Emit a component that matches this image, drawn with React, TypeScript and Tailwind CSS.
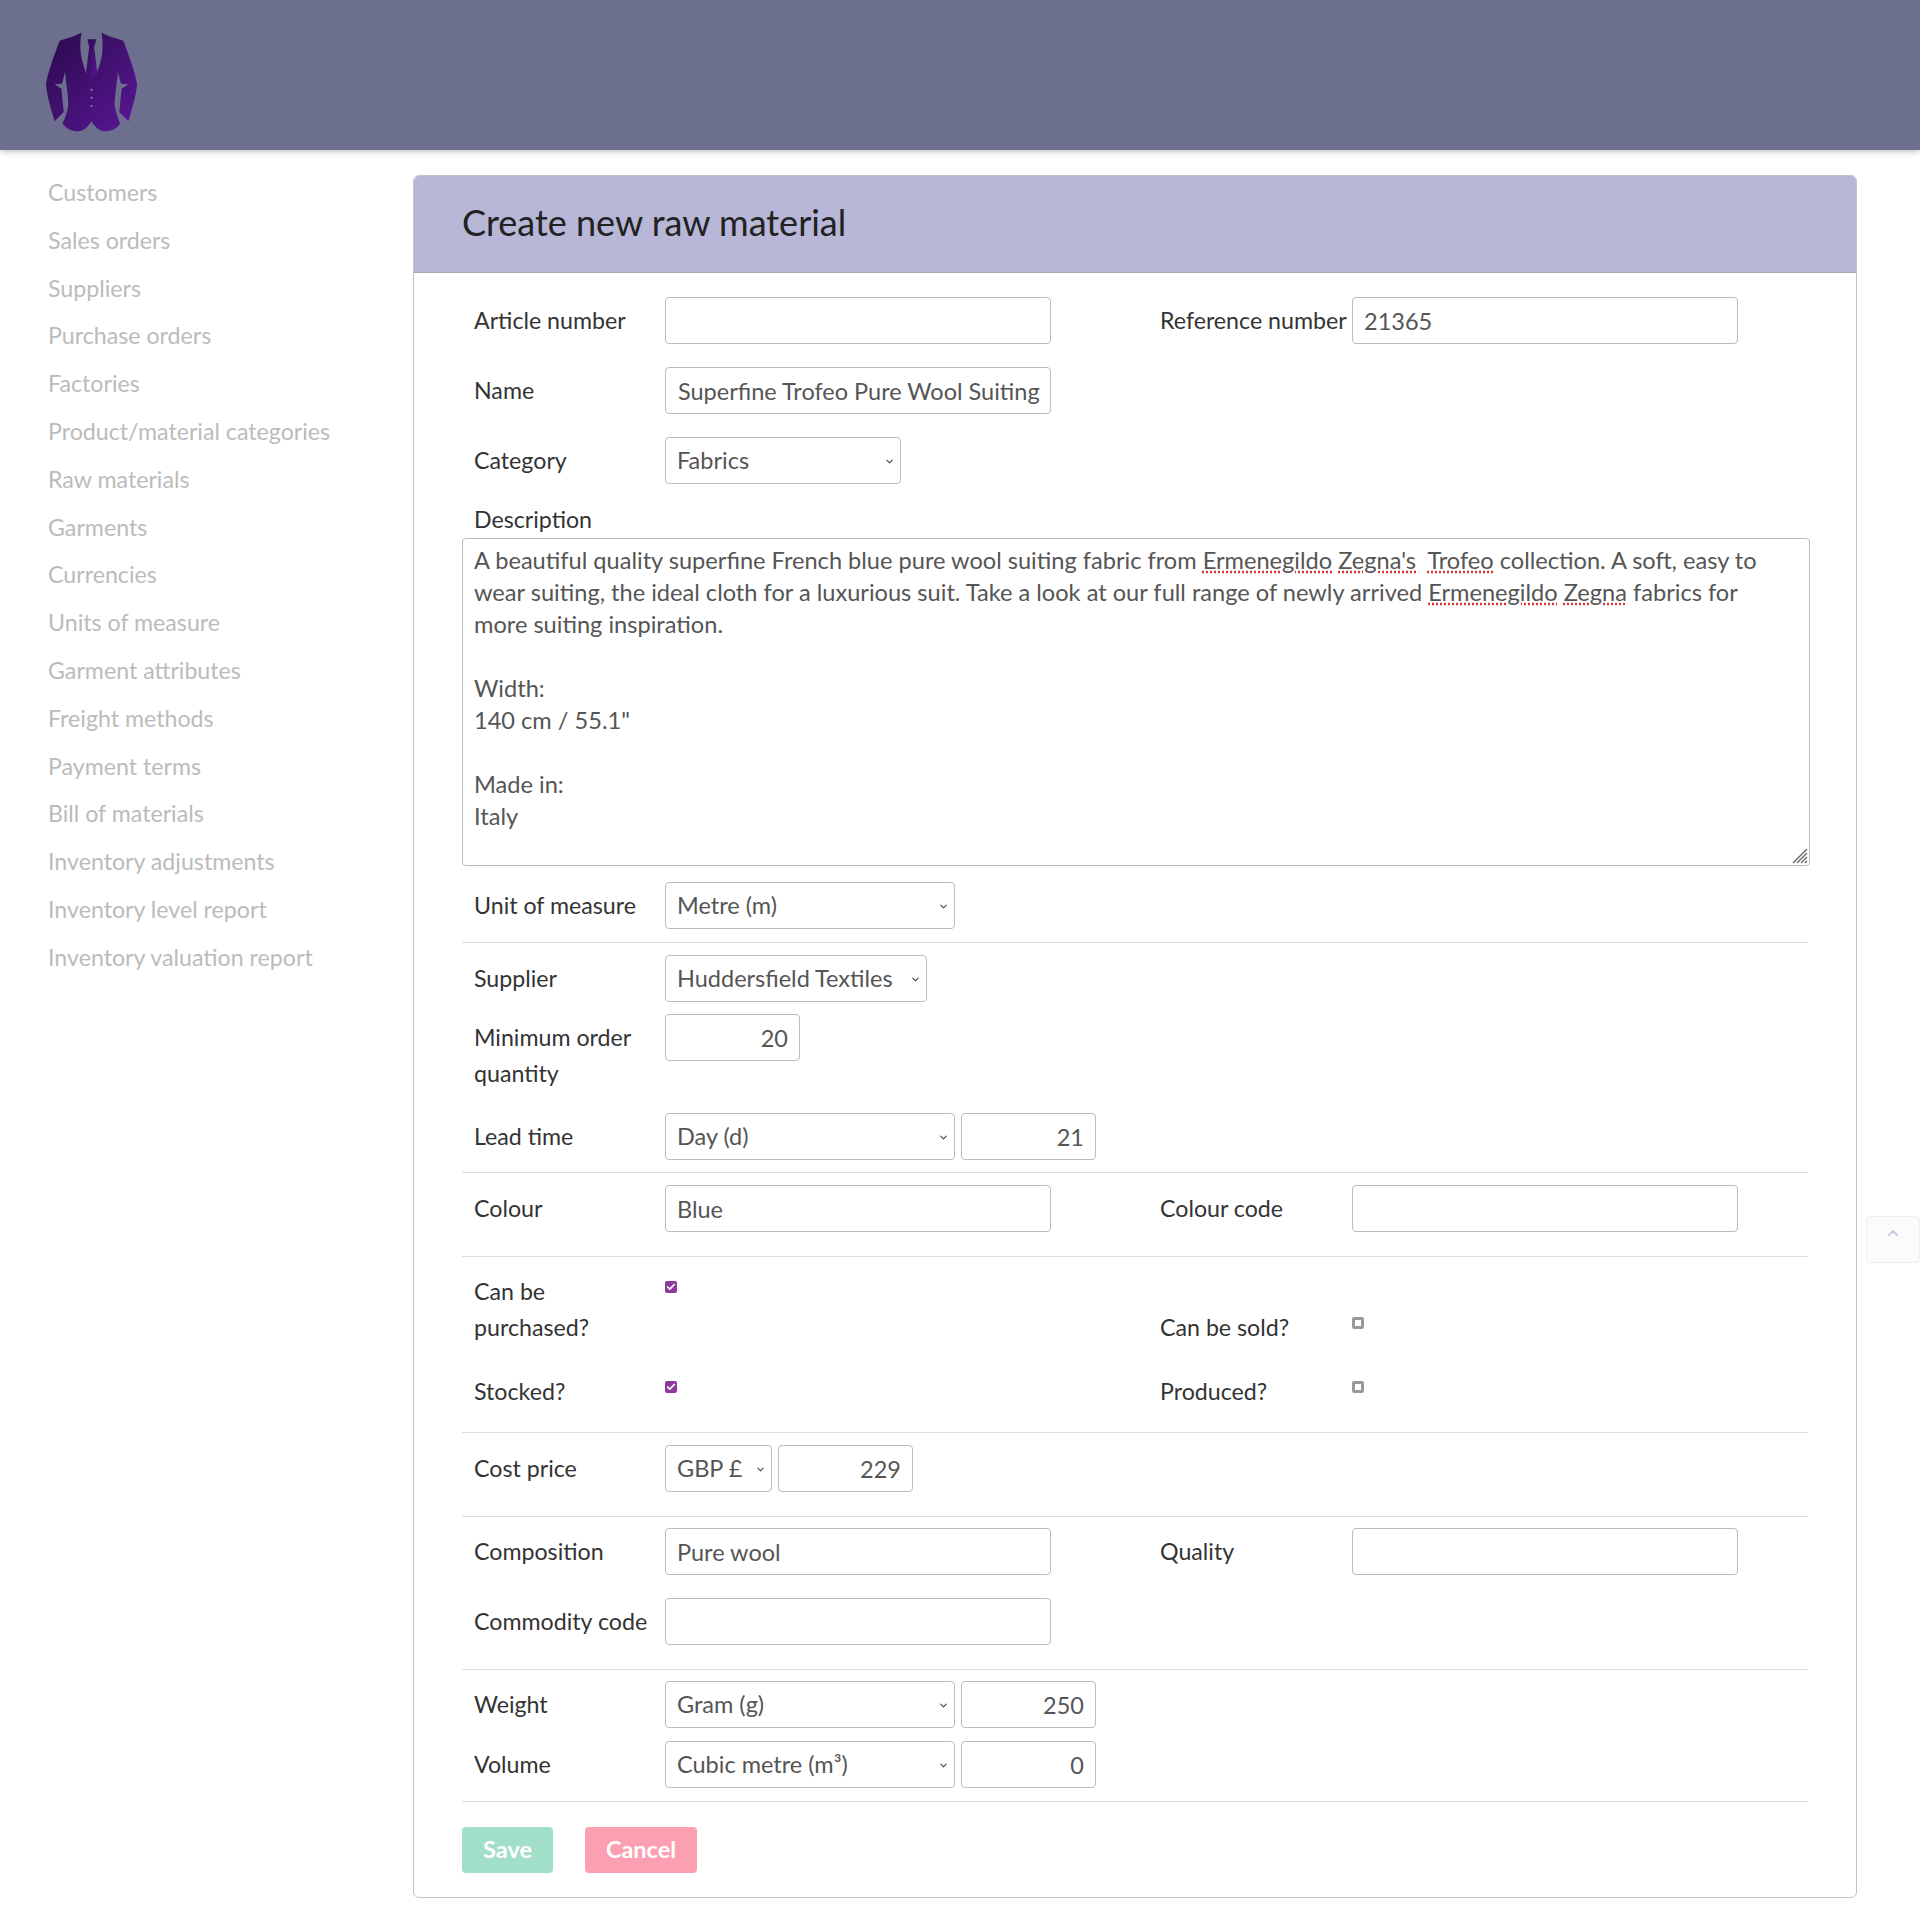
import { ChevronDown, ChevronUp, Check } from "lucide-react";
import type { ReactNode } from "react";

const menu = [
  "Customers",
  "Sales orders",
  "Suppliers",
  "Purchase orders",
  "Factories",
  "Product/material categories",
  "Raw materials",
  "Garments",
  "Currencies",
  "Units of measure",
  "Garment attributes",
  "Freight methods",
  "Payment terms",
  "Bill of materials",
  "Inventory adjustments",
  "Inventory level report",
  "Inventory valuation report",
];

function Logo() {
  return (
    <svg viewBox="130 90 290 310" className="w-[97px] h-[104px]">
      <defs>
        <linearGradient id="suit" x1="0" y1="0" x2="1" y2="1">
          <stop offset="0" stopColor="#2a0a4c" />
          <stop offset="1" stopColor="#5a1796" />
        </linearGradient>
      </defs>
      <path
        fill="url(#suit)"
        d="M245 97C225 110 195 115 180 122C165 160 145 215 139 250C140 280 155 330 165 362L192 335L185 265L165 252L187 250L196 215C200 260 208 300 205 320C200 340 195 360 188 368C200 385 215 392 235 392C250 392 265 380 275 362C285 380 300 392 315 392C335 392 350 385 361 368C355 360 350 340 345 320C342 300 350 260 354 215L363 250L385 252L365 265L358 335L385 362C395 330 410 280 411 250C405 215 385 160 370 122C355 115 325 110 305 97C310 130 312 165 291 218L275 225L259 218C238 165 240 130 245 97Z"
      />
      <path fill="url(#suit)" d="M263 117H290L283 140L292 215L275 240L259 215L268 140Z" />
      <circle cx="275" cy="268" r="3" fill="#9a86b4" />
      <circle cx="275" cy="292" r="3" fill="#9a86b4" />
      <circle cx="275" cy="317" r="3" fill="#9a86b4" />
    </svg>
  );
}

function Label({ children, wide, flat }: { children: ReactNode; wide?: boolean; flat?: boolean }) {
  return (
    <label
      className={`shrink-0 leading-[36px] text-[#333] text-[23.2px] ${flat ? "" : "pt-[5px]"} ${
        wide ? "w-[192px]" : "w-[203px] pl-3"
      }`}
    >
      {children}
    </label>
  );
}

function TextInput({ value = "", pad = "pl-[11px]" }: { value?: string; pad?: string }) {
  return (
    <input
      readOnly
      value={value}
      className={`w-[386px] h-[47px] border border-[#bbb] rounded ${pad} pr-1 bg-white text-[#555] outline-none`}
    />
  );
}

function NumberInput({ value }: { value: string }) {
  return (
    <input
      readOnly
      value={value}
      className="w-[135px] h-[47px] border border-[#bbb] rounded px-[11px] bg-white text-right text-[#555] outline-none"
    />
  );
}

function Select({ value, w }: { value: string; w: string }) {
  return (
    <div className={`relative ${w} h-[47px]`}>
      <select className="appearance-none w-full h-full border border-[#bbb] rounded pl-[11px] bg-white text-[#555] outline-none">
        <option>{value}</option>
      </select>
      <ChevronDown size={11} strokeWidth={2.25} className="absolute right-[6px] top-[19px] text-[#444]" />
    </div>
  );
}

function Checkbox({ checked }: { checked?: boolean }) {
  if (checked) {
    return (
      <span className="flex items-center justify-center w-3 h-3 rounded-[2px] bg-[#8e3a9d] text-white">
        <Check size={10} strokeWidth={4} />
      </span>
    );
  }
  return <span className="block w-3 h-3 rounded-[2px] border-[3px] border-[#999] bg-white" />;
}

function Row({ className = "", children }: { className?: string; children: ReactNode }) {
  return <div className={`flex ${className}`}>{children}</div>;
}

function Divider({ className }: { className: string }) {
  return <hr className={`border-0 h-px bg-[#dcdce4] w-[1346px] ${className}`} />;
}

function Err({ children }: { children: ReactNode }) {
  return <span className="underline decoration-dotted decoration-[#d33]">{children}</span>;
}

export default function App() {
  return (
    <div className="relative min-h-[1923px] bg-white font-['Lato','Liberation_Sans',sans-serif] text-[23.5px]">
      <header className="h-[150px] bg-[#6c6f8e] pl-[43px] pt-[30px] shadow-[0_1px_6px_rgba(0,0,0,0.3)]">
        <Logo />
      </header>

      <div className="flex">
        <nav className="w-[413px] shrink-0 pl-12 pt-[19px] text-[#bbb] text-[23.2px]">
          {menu.map((item) => (
            <div key={item} className="h-[47.8px] leading-[47.8px]">
              {item}
            </div>
          ))}
        </nav>

        <main className="w-[1444px] mt-[25px] h-[1723px] border border-[#c4c4c4] rounded-md overflow-hidden">
          <h1 className="h-[97px] bg-[#b8b7d7] border-b border-[#aaa] pl-12 text-[36px] leading-[92px] text-[#222]">
            Create new raw material
          </h1>

          <form className="pl-12 pt-6 flex flex-col">
            <Row>
              <Label>Article number</Label>
              <TextInput />
              <div className="w-[109px]" />
              <Label wide>Reference number</Label>
              <TextInput value="21365" />
            </Row>
            <Row className="mt-[23px]">
              <Label>Name</Label>
              <TextInput value="Superfine Trofeo Pure Wool Suiting" pad="pl-3" />
            </Row>
            <Row className="mt-[23px]">
              <Label>Category</Label>
              <Select value="Fabrics" w="w-[236px]" />
            </Row>
            <div className="mt-[17px] pl-3 leading-[36px] h-[36px] text-[#333] text-[23.2px]">Description</div>
            <div className="relative mt-px w-[1348px] h-[328px] border border-[#bbb] rounded pl-[11px] pt-[5px] leading-[32px] text-[#555] text-[23.6px] whitespace-pre">
              <div>
                {"A beautiful quality superfine French blue pure wool suiting fabric from "}
                <Err>Ermenegildo</Err> <Err>Zegna's</Err>
                {"  "}
                <Err>Trofeo</Err>
                {" collection. A soft, easy to"}
              </div>
              <div>
                {"wear suiting, the ideal cloth for a luxurious suit. Take a look at our full range of newly arrived "}
                <Err>Ermenegildo</Err> <Err>Zegna</Err>
                {" fabrics for"}
              </div>
              <div>more suiting inspiration.</div>
              <div className="h-8" />
              <div>Width:</div>
              <div>140 cm / 55.1"</div>
              <div className="h-8" />
              <div>Made in:</div>
              <div>Italy</div>
              <svg viewBox="0 0 16 16" className="absolute right-px bottom-px w-4 h-4" stroke="#666" strokeWidth="1.4">
                <path d="M1 15L15 1M5 15L15 5M9 15L15 9M13 15L15 13" />
              </svg>
            </div>
            <Row className="mt-4">
              <Label>Unit of measure</Label>
              <Select value="Metre (m)" w="w-[290px]" />
            </Row>
            <Divider className="mt-[13px]" />
            <Row className="mt-3">
              <Label>Supplier</Label>
              <Select value="Huddersfield Textiles" w="w-[262px]" />
            </Row>
            <Row className="mt-3 h-[87px]">
              <Label>
                Minimum order
                <br />
                quantity
              </Label>
              <NumberInput value="20" />
            </Row>
            <Row className="mt-3">
              <Label>Lead time</Label>
              <div className="flex gap-[6px]">
                <Select value="Day (d)" w="w-[290px]" />
                <NumberInput value="21" />
              </div>
            </Row>
            <Divider className="mt-3" />
            <Row className="mt-3">
              <Label>Colour</Label>
              <TextInput value="Blue" />
              <div className="w-[109px]" />
              <Label wide>Colour code</Label>
              <TextInput />
            </Row>
            <Divider className="mt-6" />
            <Row className="mt-4">
              <Label flat>
                Can be
                <br />
                purchased?
              </Label>
              <div className="w-[495px] pt-[8px]">
                <Checkbox checked />
              </div>
              <div className="flex items-end">
                <Label wide flat>
                  Can be sold?
                </Label>
                <div className="pb-[16px]">
                  <Checkbox />
                </div>
              </div>
            </Row>
            <Row className="mt-7">
              <Label flat>Stocked?</Label>
              <div className="w-[495px] pt-[8px]">
                <Checkbox checked />
              </div>
              <Label wide flat>
                Produced?
              </Label>
              <div className="pt-[8px]">
                <Checkbox />
              </div>
            </Row>
            <Divider className="mt-[23px]" />
            <Row className="mt-3">
              <Label>Cost price</Label>
              <div className="flex gap-[6px]">
                <Select value="GBP £" w="w-[107px]" />
                <NumberInput value="229" />
              </div>
            </Row>
            <Divider className="mt-6" />
            <Row className="mt-[11px]">
              <Label>Composition</Label>
              <TextInput value="Pure wool" />
              <div className="w-[109px]" />
              <Label wide>Quality</Label>
              <TextInput />
            </Row>
            <Row className="mt-[23px]">
              <Label>Commodity code</Label>
              <TextInput />
            </Row>
            <Divider className="mt-6" />
            <Row className="mt-[11px]">
              <Label>Weight</Label>
              <div className="flex gap-[6px]">
                <Select value="Gram (g)" w="w-[290px]" />
                <NumberInput value="250" />
              </div>
            </Row>
            <Row className="mt-[13px]">
              <Label>Volume</Label>
              <div className="flex gap-[6px]">
                <Select value="Cubic metre (m³)" w="w-[290px]" />
                <NumberInput value="0" />
              </div>
            </Row>
            <Divider className="mt-[13px]" />
            <div className="mt-[25px] flex gap-[32px]">
              <button type="button" className="w-[91px] h-[46px] rounded bg-[#a1dfc8] text-white font-bold">
                Save
              </button>
              <button type="button" className="w-[112px] h-[46px] rounded bg-[#fb9fb1] text-white font-bold">
                Cancel
              </button>
            </div>
          </form>
        </main>
      </div>

      <button
        type="button"
        className="absolute left-[1866px] top-[1216px] w-[54px] h-[47px] border border-[#eee] rounded bg-[#fbfbfb] flex justify-center pt-[8px] text-[#c9c9dc]"
      >
        <ChevronUp size={16} strokeWidth={3} />
      </button>
    </div>
  );
}
